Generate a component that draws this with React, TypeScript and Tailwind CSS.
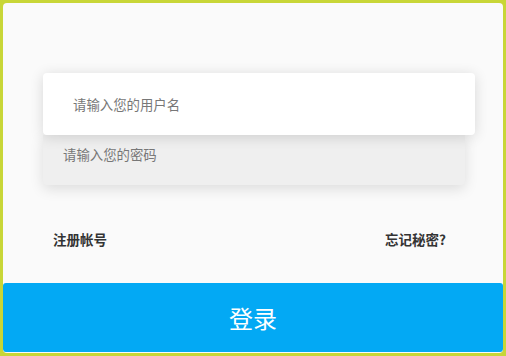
import React from "react";

export default function App() {
  const font = { fontFamily: '"Noto Sans CJK SC", "Noto Sans", sans-serif' };
  return (
    <div className="w-[506px] h-[356px] bg-[#c8d637] p-[3px]" style={font}>
      <div className="w-full h-full bg-[#fafafa] rounded-[4px] flex flex-col overflow-hidden">
        <div className="pt-[70px] pl-[40px] flex flex-col">
          <div className="w-[432px] h-[62px] bg-white rounded-[4px] shadow-[0_2px_14px_rgba(0,0,0,0.14)] flex items-center pl-[30px] relative z-10">
            <span className="text-[13.4px] text-[#777777] leading-[18px]">请输入您的用户名</span>
          </div>
          <div className="w-[422px] h-[50px] bg-[#efefef] rounded-b-[4px] shadow-[0_4px_14px_rgba(0,0,0,0.12)] pl-[20px] pt-[10px]">
            <span className="block text-[13.4px] text-[#777777] leading-[18px]">请输入您的密码</span>
          </div>
        </div>
        <div className="mt-[44px] h-[20px] flex justify-between items-center pl-[50px] pr-[57px]">
          <span className="text-[13.5px] font-bold text-[#333333] leading-[20px]">注册帐号</span>
          <span className="text-[13.5px] font-bold text-[#333333] leading-[20px]">忘记秘密?</span>
        </div>
        <div className="mt-auto mb-px h-[69px] bg-[#03a9f4] rounded-[3px] flex items-center justify-center">
          <span className="text-[24px] text-white leading-[30px]">登录</span>
        </div>
      </div>
    </div>
  );
}
